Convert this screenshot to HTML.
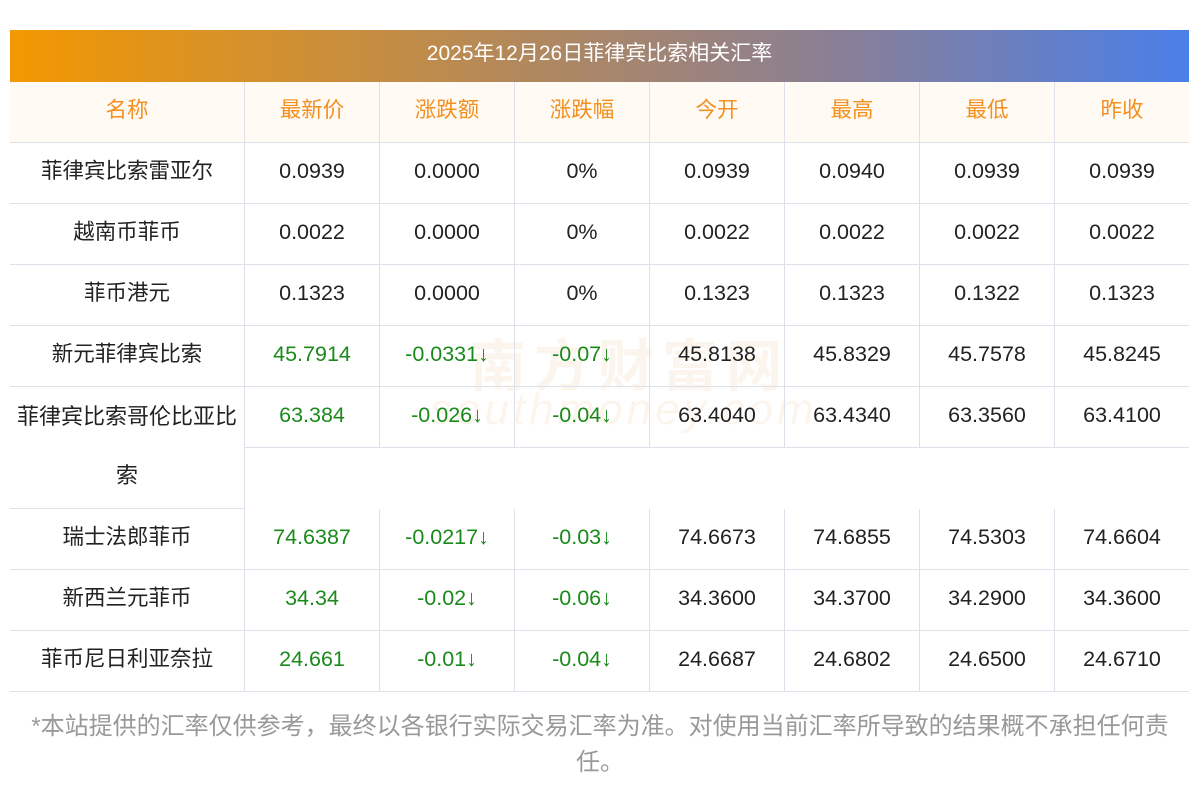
<!DOCTYPE html>
<html><head><meta charset="utf-8"><style>
body{margin:0;background:#fff;width:1200px;height:793px;position:relative;font-family:"Liberation Sans","Noto Sans CJK SC",sans-serif;overflow:hidden}
.bar{position:absolute;left:10px;top:30px;width:1179px;height:52px;background:linear-gradient(90deg,#f39800,#8a7f95 70%,#4a7fe8);color:#fff;font-size:21px;line-height:48px;text-align:center}
.c{position:absolute;box-sizing:border-box;height:61px;line-height:57px;text-align:center;font-size:21.5px;color:#222;border-bottom:1px solid #dfe1ea;border-right:1px solid #dfe1ea;white-space:nowrap}
.h{background:#fffaf3;color:#f39020}
.g{color:#1a8a1a}
.last{border-right:none}
.foot{position:absolute;left:20px;width:1160px;top:709px;font-size:24px;line-height:36px;color:#999;text-align:center}
.wm{position:absolute;left:470px;top:322px;font-size:56px;color:rgba(240,200,160,.18);font-weight:bold;letter-spacing:8px}
.wm2{position:absolute;left:430px;top:385px;font-size:44px;color:rgba(240,200,160,.18);font-style:italic;letter-spacing:4px}
</style></head><body>
<div class="bar">2025年12月26日菲律宾比索相关汇率</div>
<div class="wm">南方财富网</div><div class="wm2">southmoney.com</div>
<div id="t"></div>
<div class="foot">*本站提供的汇率仅供参考，最终以各银行实际交易汇率为准。对使用当前汇率所导致的结果概不承担任何责任。</div>
<script>
var xs=[10,245,380,515,650,785,920,1055,1189];
var rows=[
["h","名称","最新价","涨跌额","涨跌幅","今开","最高","最低","昨收"],
["","菲律宾比索雷亚尔","0.0939","0.0000","0%","0.0939","0.0940","0.0939","0.0939"],
["","越南币菲币","0.0022","0.0000","0%","0.0022","0.0022","0.0022","0.0022"],
["","菲币港元","0.1323","0.0000","0%","0.1323","0.1323","0.1322","0.1323"],
["g","新元菲律宾比索","45.7914","-0.0331↓","-0.07↓","45.8138","45.8329","45.7578","45.8245"],
["g2","菲律宾比索哥伦比亚比索","63.384","-0.026↓","-0.04↓","63.4040","63.4340","63.3560","63.4100"],
["g","瑞士法郎菲币","74.6387","-0.0217↓","-0.03↓","74.6673","74.6855","74.5303","74.6604"],
["g","新西兰元菲币","34.34","-0.02↓","-0.06↓","34.3600","34.3700","34.2900","34.3600"],
["g","菲币尼日利亚奈拉","24.661","-0.01↓","-0.04↓","24.6687","24.6802","24.6500","24.6710"]];
var h="",y=82;
rows.forEach(function(r){
 var tall=r[0]=="g2";
 for(var i=0;i<8;i++){
  var cls="c"+(r[0]=="h"?" h":"")+((r[0][0]=="g")&&i>=1&&i<=3?" g":"")+(i==7?" last":"");
  var st="left:"+xs[i]+"px;top:"+y+"px;width:"+(xs[i+1]-xs[i])+"px;";
  var txt=r[i+1];
  if(tall&&i==0){st+="height:122px;line-height:59px;font-size:22px;";txt="菲律宾比索哥伦比亚比<br>索";}
  h+='<div class="'+cls+'" style="'+st+'">'+txt+'</div>';
 }
 y+=tall?122:61;
});
document.getElementById("t").innerHTML=h;
</script>
</body></html>
